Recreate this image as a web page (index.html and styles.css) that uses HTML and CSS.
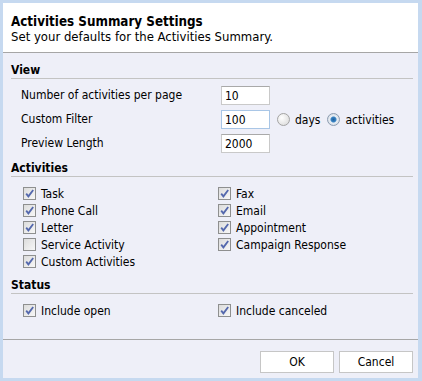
FILE: index.html
```html
<!DOCTYPE html>
<html lang="en">
<head>
    <meta charset="UTF-8">
    <title>Activities Summary Settings</title>
    <link rel="stylesheet" href="styles.css">
</head>
<body>
    <div class="dlg">
        <div class="dlgHead">
            <div class="dlgTitle">Activities Summary Settings</div>
            <div class="dlgSub">Set your defaults for the Activities Summary.</div>
        </div>
        <div class="dlgBody">
            <div class="sec">
                <div class="secTitle">View</div>
                <div class="viewGrid">
                    <div class="lbl">Number of activities per page</div>
                    <div class="fld"><input class="ipt" type="text" value="10"></div>
                    <div class="lbl">Custom Filter</div>
                    <div class="fld">
                        <input class="ipt iptFocus" type="text" value="100">
                        <span class="rad"></span><span class="radTxt">days</span>
                        <span class="rad on"></span><span class="radTxt">activities</span>
                    </div>
                    <div class="lbl">Preview Length</div>
                    <div class="fld"><input class="ipt" type="text" value="2000"></div>
                </div>
            </div>
            <div class="sec">
                <div class="secTitle">Activities</div>
                <div class="chkCols">
                    <div class="chkCol">
                        <div class="chkRow"><span class="chk on"><svg viewBox="0 0 11 11"><path d="M2.2 5.6 L4.4 8.4 L9.2 2"/></svg></span>Task</div>
                        <div class="chkRow"><span class="chk on"><svg viewBox="0 0 11 11"><path d="M2.2 5.6 L4.4 8.4 L9.2 2"/></svg></span>Phone Call</div>
                        <div class="chkRow"><span class="chk on"><svg viewBox="0 0 11 11"><path d="M2.2 5.6 L4.4 8.4 L9.2 2"/></svg></span>Letter</div>
                        <div class="chkRow"><span class="chk"></span>Service Activity</div>
                        <div class="chkRow"><span class="chk on"><svg viewBox="0 0 11 11"><path d="M2.2 5.6 L4.4 8.4 L9.2 2"/></svg></span>Custom Activities</div>
                    </div>
                    <div class="chkCol">
                        <div class="chkRow"><span class="chk on"><svg viewBox="0 0 11 11"><path d="M2.2 5.6 L4.4 8.4 L9.2 2"/></svg></span>Fax</div>
                        <div class="chkRow"><span class="chk on"><svg viewBox="0 0 11 11"><path d="M2.2 5.6 L4.4 8.4 L9.2 2"/></svg></span>Email</div>
                        <div class="chkRow"><span class="chk on"><svg viewBox="0 0 11 11"><path d="M2.2 5.6 L4.4 8.4 L9.2 2"/></svg></span>Appointment</div>
                        <div class="chkRow"><span class="chk on"><svg viewBox="0 0 11 11"><path d="M2.2 5.6 L4.4 8.4 L9.2 2"/></svg></span>Campaign Response</div>
                    </div>
                </div>
            </div>
            <div class="sec">
                <div class="secTitle">Status</div>
                <div class="chkCols">
                    <div class="chkCol">
                        <div class="chkRow"><span class="chk on"><svg viewBox="0 0 11 11"><path d="M2.2 5.6 L4.4 8.4 L9.2 2"/></svg></span>Include open</div>
                    </div>
                    <div class="chkCol">
                        <div class="chkRow"><span class="chk on"><svg viewBox="0 0 11 11"><path d="M2.2 5.6 L4.4 8.4 L9.2 2"/></svg></span>Include canceled</div>
                    </div>
                </div>
            </div>
        </div>
        <div class="dlgFoot">
            <button class="btn1">OK</button>
            <button class="btn1">Cancel</button>
        </div>
    </div>
</body>
</html>
```

FILE: styles.css
```css
body {
    margin: 0;
    background-color: #c6d9f0;
    font-family: "DejaVu Sans Condensed", "DejaVu Sans", sans-serif;
    font-stretch: condensed;
    font-size: 12px;
    color: #000;
}
.dlg {
    margin: 3px 4px 3px 3px;
    height: 375px;
    display: flex;
    flex-direction: column;
    background-color: #eeeff8;
}
.dlgHead {
    height: 49px;
    padding-left: 8px;
    background-color: #fff;
    border-bottom: 1px solid #a6a6a6;
}
.dlgTitle {
    margin-top: 11px;
    font-size: 13.3px;
    font-weight: bold;
    line-height: 16px;
}
.dlgSub {
    margin-top: 0;
    font-size: 13px;
    line-height: 14px;
}
.dlgBody {
    flex: 1;
    padding-top: 11px;
}
.sec {
    margin: 0 5px 9px 8px;
}
.secTitle {
    font-weight: bold;
    line-height: 13px;
    padding-bottom: 1px;
    border-bottom: 1px solid #c3c3c3;
}
.viewGrid {
    display: grid;
    grid-template-columns: 200px auto;
    row-gap: 5px;
    margin-top: 7px;
    padding-left: 10px;
}
.lbl {
    line-height: 19px;
    height: 19px;
}
.fld {
    display: flex;
    align-items: center;
    height: 19px;
}
.ipt {
    box-sizing: border-box;
    width: 49px;
    height: 19px;
    margin: 0;
    padding: 0 3px;
    border: 1px solid #c9c9c9;
    border-top-color: #a9a9a9;
    background-color: #fff;
    font-family: inherit;
    font-stretch: condensed;
    font-size: 12px;
    color: #000;
}
.iptFocus {
    border-color: #a9c6e6;
}
.rad {
    box-sizing: border-box;
    width: 13px;
    height: 13px;
    border-radius: 50%;
    border: 1px solid #a3a3a3;
    background: radial-gradient(circle at 35% 35%, #fff, #d6d6d6);
    margin-left: 7px;
}
.rad.on {
    border-color: #8b9bb0;
    background: radial-gradient(circle at 50% 50%, #1f5f9e 0, #3b85c4 2.5px, #e9eef4 3.5px, #c9d2dc 100%);
}
.radTxt {
    margin-left: 5px;
}
.chkCols {
    display: flex;
    margin-top: 8px;
    padding-left: 12px;
}
.chkCol {
    width: 195px;
}
.chkRow {
    display: flex;
    align-items: center;
    height: 17px;
}
.chk {
    box-sizing: border-box;
    width: 13px;
    height: 13px;
    margin-right: 5px;
    border: 1px solid #8e8f8f;
    background: linear-gradient(135deg, #dcdcdc, #f7f7f7);
}
.chk svg {
    display: block;
    width: 11px;
    height: 11px;
}
.chk path {
    fill: none;
    stroke: #5468ad;
    stroke-width: 1.8;
}
.dlgFoot {
    height: 39px;
    border-top: 1px solid #a6a6a6;
    display: flex;
    justify-content: flex-end;
    align-items: flex-start;
    gap: 5px;
    padding: 11px 5px 0 0;
    box-sizing: border-box;
}
.btn1 {
    width: 74px;
    height: 22px;
    margin: 0;
    border: 1px solid #c6c6c6;
    border-radius: 0;
    background-color: #fff;
    font-family: inherit;
    font-stretch: condensed;
    font-size: 12px;
    color: #000;
}
```
